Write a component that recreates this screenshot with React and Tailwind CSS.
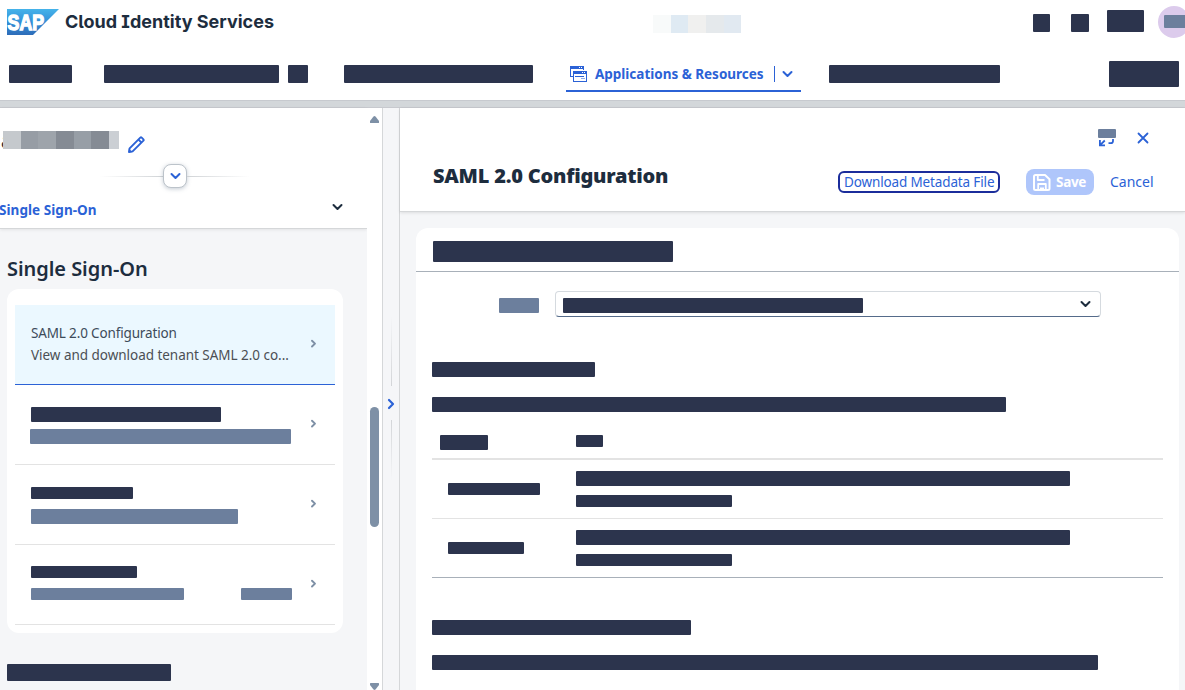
import React from "react";

const Bar = ({ className = "", soft = false }) => (
  <div className={`shrink-0 rounded-[1px] ${soft ? "bg-[#6c7f9d]" : "bg-[#2c344d]"} ${className}`} />
);

const Chevron = ({ className = "" }) => (
  <svg width="11" height="8" viewBox="0 0 11 8" fill="none" stroke="currentColor" strokeWidth="2" strokeLinecap="round" strokeLinejoin="round" className={`shrink-0 ${className}`}>
    <path d="M1.500 2 5.500 6 9.500 2" />
  </svg>
);

const ListArrow = () => (
  <svg width="7" height="9" viewBox="0 0 7 9" fill="none" stroke="#7e90a6" strokeWidth="1.900" strokeLinecap="round" strokeLinejoin="round" className="mt-[34px] ml-px shrink-0">
    <path d="M2 1.700 5 4.600 2 7.500" />
  </svg>
);

const SapLogo = () => (
  <svg width="52" height="26" viewBox="0 0 52 26" className="mt-[9px] shrink-0">
    <defs>
      <linearGradient id="sap" x1="0" y1="0" x2="0" y2="1">
        <stop offset="0" stopColor="#45b3ea" />
        <stop offset="0.5" stopColor="#3490d8" />
        <stop offset="1" stopColor="#2d6cb8" />
      </linearGradient>
    </defs>
    <path d="M0 0H52L26 26H0Z" fill="url(#sap)" />
    <text x="0.6" y="20.500" textLength="36.500" lengthAdjust="spacingAndGlyphs" fontFamily="Liberation Sans" fontWeight="700" fontSize="21.500" fill="#fff" stroke="#fff" strokeWidth="1.400">SAP</text>
  </svg>
);

const AppsIcon = () => (
  <svg width="17" height="16" viewBox="0 0 17 16" fill="none" className="shrink-0">
    <path d="M0 0H14V4H13V3H1V10H3V11H0Z" fill="#2b62d6" />
    <path d="M3 5H17V16H3Z" fill="#2b62d6" />
    <path d="M4 8H16V15H4Z" fill="#fff" />
    <path d="M9 1.500H10M11 1.500H12M12 6.500H13M14 6.500H15" stroke="#fff" />
    <path d="M5 10.500H14" stroke="#2b62d6" />
    <path d="M11 12.500H15" stroke="#8fabea" />
  </svg>
);

const PencilIcon = () => (
  <svg width="17" height="17" viewBox="0 0 17 17" fill="none" stroke="#2b62d6" strokeWidth="1.900" strokeLinejoin="round">
    <path d="M1 16 1.600 12.400 12.300 1.600Q13 1 13.700 1.600L15.400 3.300Q16 4 15.400 4.700L4.600 15.400Z" />
    <path d="M10.500 3.600 13.400 6.500" />
    <path d="M0.800 16.200V12.600L4.400 16.200Z" fill="#2b62d6" stroke="none" />
  </svg>
);

const SaveIcon = () => (
  <svg width="18" height="17" viewBox="0 0 18 17" fill="none" stroke="#fff" strokeWidth="2" strokeLinejoin="round">
    <path d="M2.500 1H12L16.500 5.200V14.500Q16.500 16 15 16H2.500Q1 16 1 14.500V2.500Q1 1 2.500 1Z" />
    <path d="M4.800 1V6H11.500M5.200 16V10H12.800V16" strokeWidth="1.800" />
    <path d="M7 13.500H11V16H7Z" fill="#fff" stroke="none" />
  </svg>
);

const ListRow = ({ children }) => (
  <div className="flex h-20 shrink-0 border-b border-[#e3e3e3] pl-4">
    <div className="w-[278px] shrink-0">{children}</div>
    <ListArrow />
  </div>
);

const Pixels = ({ className, children }) => (
  <div className={`flex h-[18px] shrink-0 ${className}`}>{children}</div>
);

export default function App() {
  return (
    <div className="flex h-[690px] w-[1185px] flex-col overflow-hidden bg-white font-['Noto_Sans','Open_Sans',sans-serif]">
      <header className="h-[100px] shrink-0 overflow-hidden">
        <div className="flex h-[48px] items-start pl-[7px]">
          <SapLogo />
          <h1 className="mt-[9px] ml-[6px] w-[588px] shrink-0 font-['Inter',sans-serif] text-[18px] leading-[26px] font-bold text-[#1d2d3e] [font-feature-settings:'cv05','cv08']">Cloud Identity Services</h1>
          <Pixels className="mt-[15px]">
            <div className="w-[18px] bg-[#f8fafa]" />
            <div className="w-[17px] bg-[#dfeaf3]" />
            <div className="w-[18px] bg-[#f0f0ef]" />
            <div className="w-[18px] bg-[#e5e9ec]" />
            <div className="w-[17px] bg-[#e1e9f1]" />
          </Pixels>
          <Bar className="mt-[14px] ml-[292px] h-[18px] w-[17px]" />
          <Bar className="mt-[14px] ml-[21px] h-[18px] w-[18px]" />
          <Bar className="mt-[10px] ml-[18px] h-[22px] w-[37px]" />
          <div className="mt-[6px] ml-[14px] h-8 w-8 shrink-0 rounded-full bg-[#dccbec] pt-[9px] pl-[6px]">
            <Bar soft className="h-[13px] w-[22px]" />
          </div>
        </div>
        <nav className="flex h-[52px] items-start pl-[9px]">
          <Bar className="mt-[17px] h-[18px] w-[63px]" />
          <Bar className="mt-[17px] ml-8 h-[18px] w-[175px]" />
          <Bar className="mt-[17px] ml-[9px] h-[18px] w-[20px]" />
          <Bar className="mt-[17px] ml-9 h-[18px] w-[189px]" />
          <div className="ml-[33px] flex h-[44px] w-[235px] shrink-0 items-center border-b-2 border-[#2b62d6] pt-[10px] pl-1 text-[#2b62d6]">
            <AppsIcon />
            <span className="ml-2 w-[179px] text-[13.5px] leading-5 font-bold tracking-[-0.02px] whitespace-nowrap">Applications &amp; Resources</span>
            <span className="h-4 w-px bg-[#2b62d6]" />
            <Chevron className="ml-[7px]" />
          </div>
          <Bar className="mt-[17px] ml-7 h-[18px] w-[171px]" />
          <Bar className="mt-[13px] ml-[109px] h-[26px] w-[70px]" />
        </nav>
      </header>
      <div className="h-2 shrink-0 border-y border-t-[#c7cacf] border-b-[#c7c9ce] bg-[#d3d7da]" />
      <div className="flex h-[582px]">
        <aside className="flex w-[367px] shrink-0 flex-col bg-[#f5f6f8]">
          <div className="h-[121px] shrink-0 border-b border-[#d5d7d9] bg-white shadow-[0_1px_3px_rgba(0,0,0,0.08)]">
            <div className="flex h-[48px] items-start">
              <span className="mt-[21px] w-[3px] overflow-hidden pl-px text-[20px] leading-6 font-bold text-[#1d2d3e]">a</span>
              <Pixels className="mt-[23px]">
                <div className="w-[18px] bg-[#c5c9cd]" />
                <div className="w-[17px] bg-[#979da5]" />
                <div className="w-[18px] bg-[#9ea4ab]" />
                <div className="w-[18px] bg-[#858b94]" />
                <div className="w-[17px] bg-[#979ea6]" />
                <div className="w-[18px] bg-[#858b94]" />
                <div className="w-[10px] bg-[#cbcfd4]" />
              </Pixels>
              <div className="mt-[28px] ml-[9px]"><PencilIcon /></div>
            </div>
            <div className="flex h-10 items-center pl-[100px]">
              <div className="h-px w-[63px] bg-linear-to-r from-transparent to-[#d0d3d6]" />
              <div className="flex h-[24px] w-[24px] items-center justify-center rounded-lg border border-[#bcc3ca] bg-white text-[#2b62d6] shadow-[0_1px_4px_rgba(85,107,130,0.35)]"><Chevron /></div>
              <div className="h-px w-[63px] bg-linear-to-l from-transparent to-[#d0d3d6]" />
            </div>
            <div className="flex h-[28px] items-center justify-between pr-6">
              <span className="-ml-px text-[13.5px] leading-5 font-bold tracking-[0.05px] text-[#2b62d6]">Single Sign-On</span>
              <Chevron className="-mt-[6px] text-[#1d2d3e]" />
            </div>
          </div>
          <h2 className="mt-[27px] ml-[7px] h-[33px] text-[20px] leading-[26px] font-semibold tracking-[-0.05px] text-[#1d2d3e]">Single Sign-On</h2>
          <div className="ml-[7px] flex h-[344px] w-[336px] shrink-0 flex-col rounded-xl bg-white px-2 pt-4">
            <div className="flex h-20 shrink-0 border-b border-[#2b62d6] bg-[#ebf8ff] pl-4">
              <div className="w-[278px] shrink-0 pt-[17px] text-[13.5px] leading-[22px] whitespace-nowrap">
                <p className="tracking-[-0.15px] text-[#3d4b5a]">SAML 2.0 Configuration</p>
                <p className="tracking-[-0.03px] text-[#4b4f54]">View and download tenant SAML 2.0 co...</p>
              </div>
              <ListArrow />
            </div>
            <ListRow>
              <Bar className="mt-[22px] h-[15px] w-[190px]" />
              <Bar soft className="mt-[7px] -ml-px h-[15px] w-[261px]" />
            </ListRow>
            <ListRow>
              <Bar className="mt-[22px] h-[12px] w-[102px]" />
              <Bar soft className="mt-[10px] h-[15px] w-[207px]" />
            </ListRow>
            <ListRow>
              <Bar className="mt-[21px] h-[12px] w-[106px]" />
              <div className="mt-[10px] flex gap-[57px]">
                <Bar soft className="h-[12px] w-[153px]" />
                <Bar soft className="h-[12px] w-[51px]" />
              </div>
            </ListRow>
          </div>
          <Bar className="mt-[31px] ml-[7px] h-[17px] w-[164px]" />
        </aside>
        <div className="flex w-[15px] shrink-0 flex-col items-center bg-white">
          <svg width="9" height="7" viewBox="0 0 9 7" className="mt-2 shrink-0"><path d="M3.500 .5Q4.500-.3 5.500 .5L9 5V6.500Q9 7 8.500 7H.5Q0 7 0 6.500V5Z" fill="#7e90a6" /></svg>
          <div className="mt-[284px] h-[120px] w-[9px] shrink-0 rounded-full bg-[#7e90a6]" />
          <svg width="9" height="7" viewBox="0 0 9 7" className="mt-[156px] shrink-0"><path d="M3.500 6.500Q4.500 7.300 5.500 6.500L9 2V.5Q9 0 8.500 0H.5Q0 0 0 .5V2Z" fill="#7e90a6" /></svg>
        </div>
        <div className="flex w-[18px] shrink-0 flex-col items-center border-x border-[#d5d7d9] bg-[#f5f6f8]">
          <div className="mt-[208px] h-[70px] w-px bg-linear-to-t from-[#d3d5d8] to-transparent" />
          <svg width="8" height="12" viewBox="0 0 8 12" fill="none" stroke="#2b62d6" strokeWidth="2.200" strokeLinecap="round" strokeLinejoin="round" className="mt-[12px] mb-[10px] shrink-0"><path d="M2 2 6 6 2 10" /></svg>
          <div className="h-[60px] w-px bg-linear-to-b from-[#d3d5d8] to-transparent" />
        </div>
        <main className="flex w-[785px] shrink-0 flex-col bg-[#f5f6f8]">
          <div className="h-[104px] shrink-0 border-b border-[#d5d7d9] bg-white shadow-[0_1px_3px_rgba(0,0,0,0.1)]">
            <div className="flex h-[50px] items-start">
              <div className="mt-[21px] ml-[698px] w-[18px] text-[#2b62d6]">
                <Bar soft className="h-[9px] w-[18px]" />
                <svg width="18" height="9" viewBox="0 0 18 9" fill="none" stroke="currentColor" strokeWidth="1.800">
                  <path d="M1.900 2V7.300H7M2.300 6.800 6.800 2.500M15 1V3Q15 5.200 12.800 5.200H10.500" />
                </svg>
              </div>
              <svg width="12" height="12" viewBox="0 0 12 12" fill="none" stroke="#2b62d6" strokeWidth="1.800" strokeLinecap="round" className="mt-[24px] ml-[21px]"><path d="M1.500 1.500 10.500 10.500M10.500 1.500 1.500 10.500" /></svg>
            </div>
            <div className="flex h-[48px] items-center text-[13.5px] text-[#2b62d6]">
              <h2 className="-mt-3 ml-[33px] w-[405px] shrink-0 text-[20px] leading-[26px] font-black tracking-[-0.22px] text-[#1d2d3e]">SAML 2.0 Configuration</h2>
              <button className="flex h-[22px] w-[162px] shrink-0 items-center rounded-md border-2 border-[#1b2d9b] pl-[4px] tracking-[-0.14px] whitespace-nowrap">Download Metadata File</button>
              <button className="ml-[26px] flex h-[26px] w-[68px] shrink-0 items-center gap-[5px] rounded-lg bg-[#afc6fb] pl-[7px] font-bold tracking-[-0.3px] text-white"><SaveIcon />Save</button>
              <button className="ml-[16px] text-sm">Cancel</button>
            </div>
          </div>
          <section className="mt-4 ml-4 w-[763px] grow rounded-t-xl bg-white">
            <div className="h-[44px] border-b border-[#a8b0b9] pt-[13px] pl-[17px]">
              <Bar className="h-[21px] w-[240px]" />
            </div>
            <div className="mt-[19px] flex h-[26px] items-center">
              <Bar soft className="mt-[3px] ml-[83px] h-[15px] w-[40px]" />
              <div className="ml-4 flex h-[26px] w-[546px] items-center justify-between rounded border border-[#d5dadf] border-b-[#556b8a] pr-[9px] pl-[7px]">
                <Bar className="mt-[3px] h-[15px] w-[300px]" />
                <Chevron className="text-[#1d2d3e]" />
              </div>
            </div>
            <div className="px-4">
              <Bar className="mt-[45px] h-[15px] w-[163px]" />
              <Bar className="mt-[20px] h-[15px] w-[574px]" />
              <div className="mt-[23px] flex h-[25px] border-b-2 border-[#e3e3e3] pl-2">
                <Bar className="h-[15px] w-[48px]" />
                <Bar className="ml-[88px] h-[12px] w-[27px]" />
              </div>
              <div className="flex h-[59px] border-b border-[#e3e3e3] pl-4">
                <Bar className="mt-[23px] h-[12px] w-[92px]" />
                <div className="ml-9 pt-[11px]">
                  <Bar className="h-[15px] w-[494px]" />
                  <Bar className="mt-[9px] h-[12px] w-[156px]" />
                </div>
              </div>
              <div className="flex h-[59px] border-b border-[#a8b0b9] pl-4">
                <Bar className="mt-[23px] h-[12px] w-[76px]" />
                <div className="ml-[52px] pt-[11px]">
                  <Bar className="h-[15px] w-[494px]" />
                  <Bar className="mt-[9px] h-[12px] w-[156px]" />
                </div>
              </div>
              <Bar className="mt-[42px] h-[15px] w-[259px]" />
              <Bar className="mt-[20px] h-[15px] w-[666px]" />
            </div>
          </section>
        </main>
      </div>
    </div>
  );
}
